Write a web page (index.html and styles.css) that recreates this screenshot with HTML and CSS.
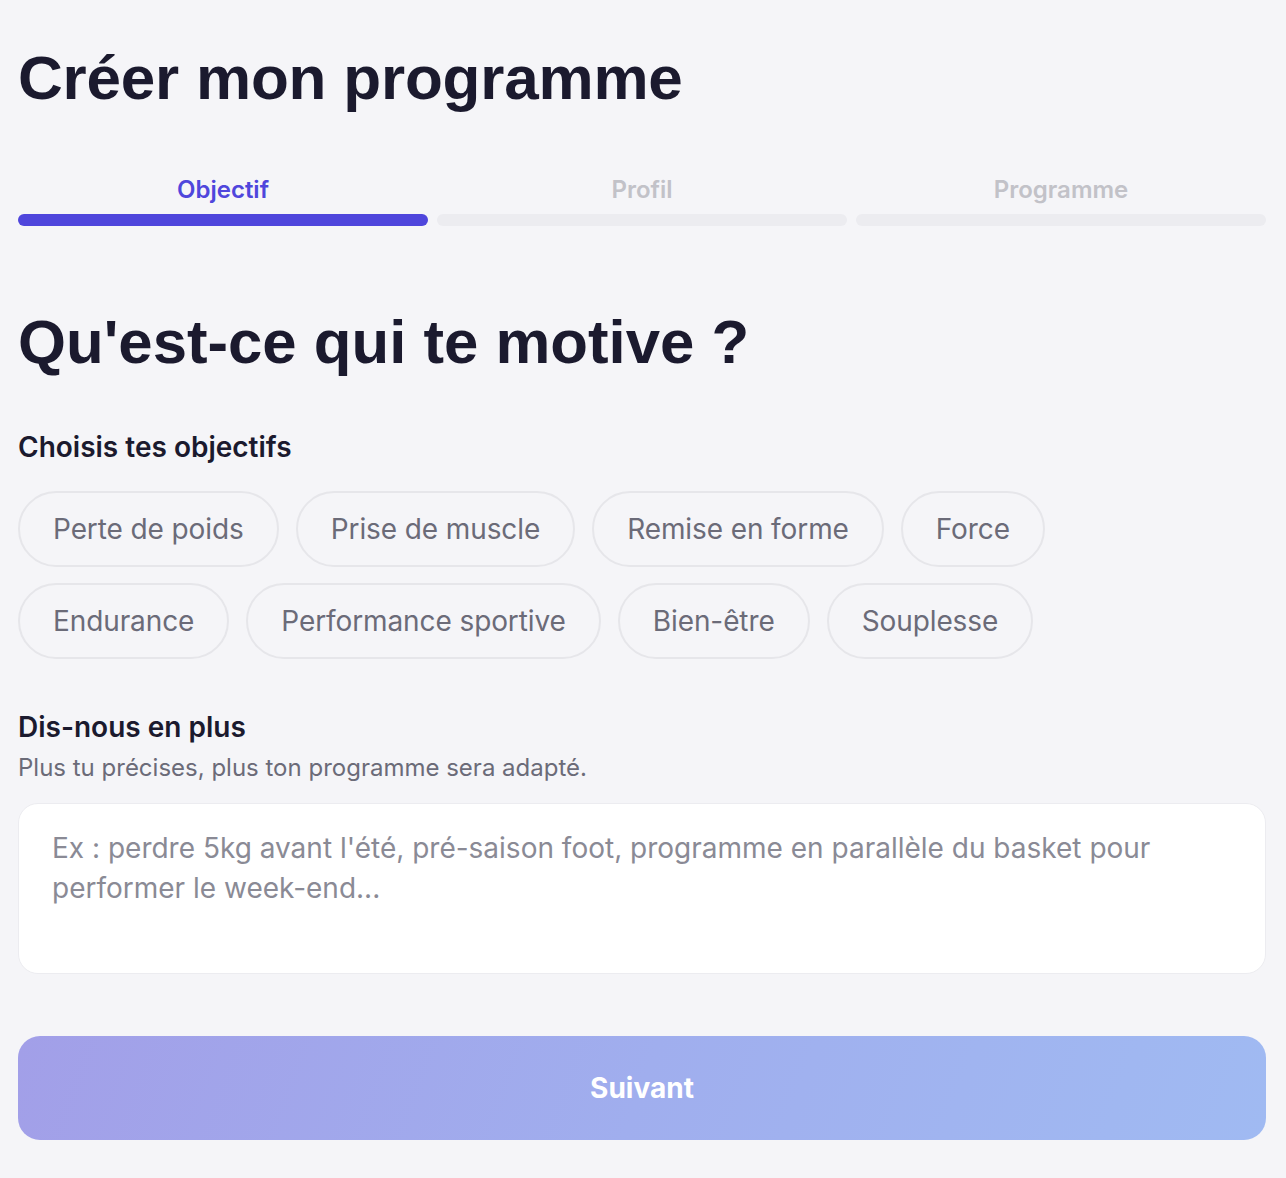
FILE: index.html
```html
<!DOCTYPE html>
<html lang="fr">
<head>
    <meta charset="UTF-8">
    <meta name="viewport" content="width=device-width, initial-scale=1.0">
    <title>Créer mon programme</title>
    <link rel="stylesheet" href="styles.css">
</head>
<body>
    <main class="page">
        <h1 class="page-title">Créer mon programme</h1>

        <!-- Steps -->
        <div class="steps">
            <div class="step active">
                <span class="step-label">Objectif</span>
                <span class="step-bar"></span>
            </div>
            <div class="step">
                <span class="step-label">Profil</span>
                <span class="step-bar"></span>
            </div>
            <div class="step">
                <span class="step-label">Programme</span>
                <span class="step-bar"></span>
            </div>
        </div>

        <h2 class="question">Qu'est-ce qui te motive ?</h2>

        <section class="block">
            <h3 class="block-title">Choisis tes objectifs</h3>
            <div class="chips">
                <button class="chip">Perte de poids</button>
                <button class="chip">Prise de muscle</button>
                <button class="chip">Remise en forme</button>
                <button class="chip">Force</button>
                <button class="chip">Endurance</button>
                <button class="chip">Performance sportive</button>
                <button class="chip">Bien-être</button>
                <button class="chip">Souplesse</button>
            </div>
        </section>

        <section class="block more">
            <h3 class="block-title">Dis-nous en plus</h3>
            <p class="hint">Plus tu précises, plus ton programme sera adapté.</p>
            <textarea class="details" placeholder="Ex : perdre 5kg avant l'été, pré-saison foot, programme en parallèle du basket pour performer le week-end..."></textarea>
        </section>

        <button class="next" disabled>Suivant</button>
    </main>
</body>
</html>
```

FILE: styles.css
```css
:root {
    --bg: #f5f5f8;
    --ink: #1b1a2e;
    --muted: #6b6b78;
    --primary: #4f46dc;
    --line: #e6e6ea;
}

* {
    box-sizing: border-box;
}

body {
    margin: 0;
    background: var(--bg);
    font-family: 'Inter', 'Liberation Sans', sans-serif;
    color: var(--ink);
}

.page {
    padding: 40px 20px 38px 18px;
}

.page-title {
    margin: 0;
    font-family: 'Liberation Sans', Arial, sans-serif;
    font-weight: 700;
    font-size: 62px;
    line-height: 76px;
    letter-spacing: -0.2px;
}

.steps {
    display: grid;
    grid-template-columns: repeat(3, 1fr);
    gap: 9px;
    margin-top: 59px;
}

.step {
    display: flex;
    flex-direction: column;
    align-items: center;
    gap: 9px;
}

.step-label {
    font-size: 24px;
    font-weight: 600;
    line-height: 30px;
    color: #c2c2c8;
}

.step-bar {
    width: 100%;
    height: 12px;
    border-radius: 6px;
    background: #ececf0;
}

.step.active .step-label {
    color: var(--primary);
}

.step.active .step-bar {
    background: var(--primary);
}

.question {
    margin: 78px 0 0;
    font-family: 'Liberation Sans', Arial, sans-serif;
    font-weight: 700;
    font-size: 61.7px;
    line-height: 76px;
}

.block {
    margin-top: 49px;
}

.block-title {
    margin: 0;
    font-size: 28px;
    font-weight: 600;
    line-height: 36px;
}

.chips {
    display: flex;
    flex-wrap: wrap;
    gap: 16px 17px;
    margin-top: 26px;
    max-width: 1040px;
}

.chip {
    height: 76px;
    padding: 0 33px;
    border: 2px solid var(--line);
    border-radius: 38px;
    background: transparent;
    font-family: inherit;
    font-size: 28px;
    letter-spacing: -0.1px;
    color: var(--muted);
}

.more {
    margin-top: 50px;
}

.hint {
    margin: 6px 0 0;
    font-size: 24px;
    line-height: 34px;
    color: var(--muted);
}

.details {
    display: block;
    width: 100%;
    height: 171px;
    margin-top: 18px;
    padding: 24px 33px;
    border: 1.5px solid #ececf0;
    border-radius: 20px;
    background: #fff;
    font-family: inherit;
    font-size: 28px;
    line-height: 40px;
    color: var(--ink);
    resize: none;
}

.details::placeholder {
    color: #8a8a95;
}

.next {
    display: block;
    width: 100%;
    height: 104px;
    margin-top: 62px;
    border: none;
    border-radius: 22px;
    background: linear-gradient(110deg, #a29fe8 0%, #a0aeee 50%, #a0baf2 100%);
    font-family: inherit;
    font-size: 28px;
    font-weight: 700;
    color: #fff;
}
```
